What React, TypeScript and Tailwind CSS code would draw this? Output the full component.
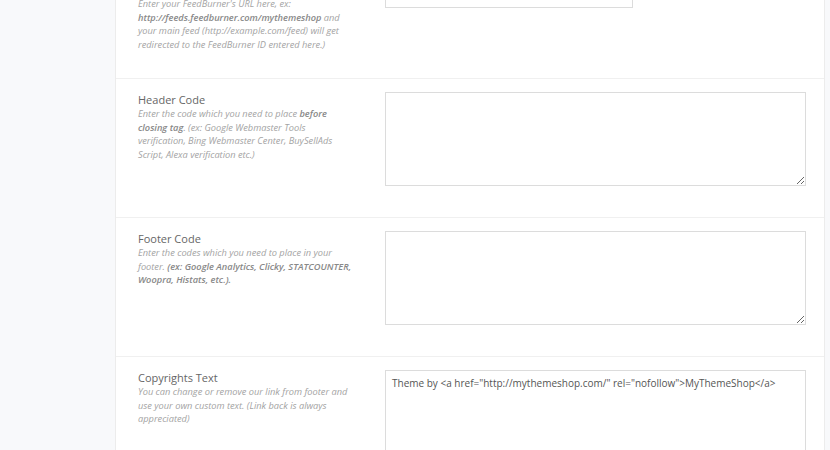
import React from "react"

type Row = {
  title: string
  desc: React.ReactNode
  field: "input" | "textarea"
  value?: string
}

const rows: Row[] = [
  {
    title: "FeedBurner URL",
    desc: (
      <>
        Enter your FeedBurner's URL here, ex:{" "}
        <b className="font-semibold text-[#888]">http://feeds.feedburner.com/mythemeshop</b> and
        your main feed (http://example.com/feed) will get redirected to the FeedBurner ID
        entered here.)
      </>
    ),
    field: "input",
  },
  {
    title: "Header Code",
    desc: (
      <>
        Enter the code which you need to place{" "}
        <b className="font-semibold text-[#888]">before closing tag</b>. (ex: Google Webmaster
        Tools verification, Bing Webmaster Center, BuySellAds Script, Alexa verification etc.)
      </>
    ),
    field: "textarea",
  },
  {
    title: "Footer Code",
    desc: (
      <>
        Enter the codes which you need to place in your footer.{" "}
        <b className="font-semibold text-[#888]">
          (ex: Google Analytics, Clicky, STATCOUNTER, Woopra, Histats, etc.).
        </b>
      </>
    ),
    field: "textarea",
  },
  {
    title: "Copyrights Text",
    desc: (
      <>
        You can change or remove our link from footer and use your own custom text. (Link back
        is always appreciated)
      </>
    ),
    field: "textarea",
    value: 'Theme by <a href="http://mythemeshop.com/" rel="nofollow">MyThemeShop</a>',
  },
]

export default function App() {
  return (
    <div
      className="flex h-[450px] w-[830px] overflow-hidden bg-[#f8f9fb]"
      style={{ fontFamily: '"Open Sans", sans-serif' }}
    >
      {/* sidebar */}
      <div className="w-[116px] shrink-0 border-r border-[#ececec] bg-[#f8f9fb]" />

      {/* options panel */}
      <div className="w-[709px] shrink-0 border-r border-[#ececec] bg-white">
        <div className="-mt-[31px]">
          {rows.map((row, i) => (
            <div
              key={i}
              className="grid grid-cols-[247px_421px] border-b border-[#f0f0f0] pb-[27px] pl-[22px] pt-[13px]"
            >
              <div className="w-[216px]">
                <p className="text-[11px] leading-[15px] text-[#666]">{row.title}</p>
                <p className="text-[9.25px] italic leading-[13.5px] text-[#a3a3a3]">{row.desc}</p>
              </div>
              {row.field === "input" ? (
                <div>
                  <input
                    type="text"
                    className="h-[26px] w-[248px] border border-[#dcdcdc] bg-white"
                  />
                </div>
              ) : (
                <div className="pb-1">
                  <textarea
                    defaultValue={row.value}
                    className="block h-[94px] w-[421px] border border-[#dcdcdc] bg-white px-[6px] py-[5px] text-[10px] leading-[14px] text-[#555] outline-none"
                  />
                </div>
              )}
            </div>
          ))}
        </div>
      </div>
    </div>
  )
}
